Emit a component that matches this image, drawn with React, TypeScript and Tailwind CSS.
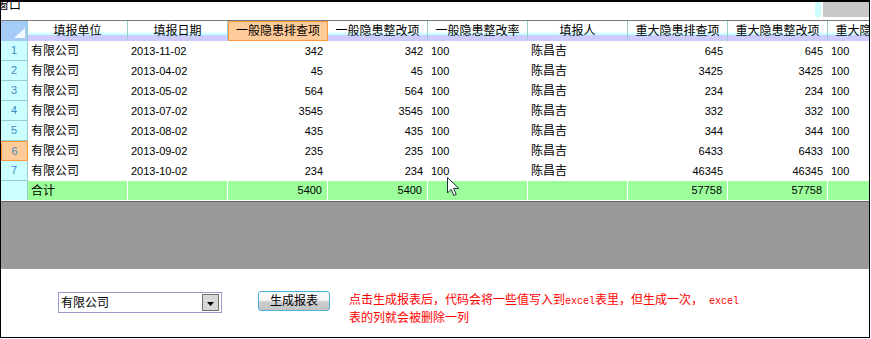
const headers = [
  "填报单位",
  "填报日期",
  "一般隐患排查项",
  "一般隐患整改项",
  "一般隐患整改率",
  "填报人",
  "重大隐患排查项",
  "重大隐患整改项",
  "重大隐患整改率",
];

// true = right aligned number column
const rightCols = [false, false, true, true, false, false, true, true, false];
const numCols = [false, true, true, true, true, false, true, true, true];

const rows = [
  ["有限公司", "2013-11-02", "342", "342", "100", "陈昌吉", "645", "645", "100"],
  ["有限公司", "2013-04-02", "45", "45", "100", "陈昌吉", "3425", "3425", "100"],
  ["有限公司", "2013-05-02", "564", "564", "100", "陈昌吉", "234", "234", "100"],
  ["有限公司", "2013-07-02", "3545", "3545", "100", "陈昌吉", "332", "332", "100"],
  ["有限公司", "2013-08-02", "435", "435", "100", "陈昌吉", "344", "344", "100"],
  ["有限公司", "2013-09-02", "235", "235", "100", "陈昌吉", "6433", "6433", "100"],
  ["有限公司", "2013-10-02", "234", "234", "100", "陈昌吉", "46345", "46345", "100"],
];

const totals = ["合计", "", "5400", "5400", "", "", "57758", "57758", ""];

const Cursor = () => (
  <svg
    className="absolute left-[447px] top-[177px]"
    width="13"
    height="20"
    viewBox="0 0 13 20"
  >
    <path
      d="M0.5 0.5 L0.5 16 L4.2 12.3 L6.8 18.5 L9.2 17.5 L6.6 11.4 L11.8 11.4 Z"
      fill="#ffffff"
      stroke="#1f2f3f"
      strokeWidth="1"
      strokeLinejoin="round"
    />
  </svg>
);

const App = () => {
  return (
    <div
      className="relative w-[871px] h-[339px] bg-white overflow-hidden"
      style={{ fontFamily: '"Liberation Sans", "Noto Sans CJK SC", sans-serif' }}
    >
      <div className="w-[870px] h-[338px] border-t-2 border-l border-r border-b border-black flex flex-col overflow-hidden">
        {/* title strip */}
        <div className="h-[18px] flex items-start">
          <span className="text-[12px] leading-none -ml-[4px] -mt-[3px] text-black">窗口</span>
          <div className="flex-1" />
          <div className="w-[6px] h-[17px] bg-[#ccffff] -mt-[2px]" />
          <div className="w-[2px]" />
          <div className="w-[46px] h-[17px] bg-[#c8c8c8] -mt-[2px]" />
        </div>

        {/* grid */}
        <div className="border-t border-[#7a7a7a] overflow-hidden">
          {/* header */}
          <div className="flex h-[20px]">
            <div className="relative w-[27px] shrink-0 bg-[#a4ccf6] border-r border-[#99cccc]">
              <svg className="absolute right-[2px] bottom-[3px]" width="11" height="10" viewBox="0 0 11 10">
                <path d="M11 0 L11 10 L0 10 Z" fill="#f4f8ff" />
              </svg>
            </div>
            {headers.map((h, i) =>
              i === 2 ? (
                <div
                  key={h}
                  className="w-[100px] shrink-0 border border-[#ff9a3c] bg-[#ffcc99] flex items-center justify-center text-[12px] text-black whitespace-nowrap"
                >
                  {h}
                </div>
              ) : (
                <div
                  key={h}
                  className="w-[100px] shrink-0 border-r border-[#99cccc] bg-[linear-gradient(to_bottom,#ffffff_0%,#ffffff_55%,#ccffff_62%,#ccffff_72%,#ccccff_72%,#ccccff_100%)] flex items-center justify-center text-[12px] text-black whitespace-nowrap overflow-hidden"
                >
                  {h}
                </div>
              )
            )}
          </div>

          {/* data rows */}
          {rows.map((r, ri) => (
            <div key={ri} className="flex h-[20px]">
              <div
                className={
                  ri === 5
                    ? "w-[27px] shrink-0 bg-[#ffcc99] border border-[#ff9a3c] flex items-center justify-center text-[11px] text-[#3a8ac4]"
                    : "w-[27px] shrink-0 bg-[#ccffff] border-r border-b border-[#99cccc] flex items-center justify-center text-[11px] text-[#3a8ac4]"
                }
              >
                {ri + 1}
              </div>
              {r.map((c, ci) => (
                <div
                  key={ci}
                  className={
                    "w-[100px] shrink-0 flex items-center whitespace-nowrap text-black " +
                    (rightCols[ci] ? "justify-end pr-[5px] " : "justify-start pl-[3px] ") +
                    (numCols[ci] ? "text-[11px]" : "text-[12px]")
                  }
                >
                  {c}
                </div>
              ))}
            </div>
          ))}

          {/* totals */}
          <div className="flex h-[20px] border-b border-white">
            <div className="w-[27px] shrink-0 bg-[#ccffff] border-r border-[#99cccc]" />
            {totals.map((c, ci) => (
              <div
                key={ci}
                className={
                  "w-[100px] shrink-0 bg-[#9cff9c] border-r border-white flex items-center whitespace-nowrap text-black " +
                  (rightCols[ci] ? "justify-end pr-[5px] " : "justify-start pl-[3px] ") +
                  (ci === 0 ? "text-[12px]" : "text-[11px]")
                }
              >
                {c}
              </div>
            ))}
          </div>
        </div>

        {/* empty grey area of the grid */}
        <div className="h-[68px] bg-[#999999] border-t border-[#666666]" />

        {/* bottom panel */}
        <div className="flex-1 flex items-start pl-[57px] pt-[23px]">
          <div className="w-[164px] h-[21px] border border-[#9a9ad0] flex items-center justify-between pl-[2px] pr-[2px]">
            <span className="text-[12px] text-black">有限公司</span>
            <div className="w-[17px] h-[17px] border border-[#6f6f6f] bg-[#d8d8d8] flex items-end justify-center pb-[4px]">
              <svg width="7" height="4" viewBox="0 0 7 4">
                <path d="M0 0 L7 0 L3.5 4 Z" fill="#000000" />
              </svg>
            </div>
          </div>
          <button className="ml-[36px] -mt-[1px] w-[72px] h-[20px] rounded-[3px] border border-[#4fb0e0] bg-[linear-gradient(to_bottom,#ffffff_0%,#f4f4f4_45%,#cccccc_55%,#c4c4c4_100%)] text-[12px] text-black leading-none">
            生成报表
          </button>
          <div className="ml-[19px] text-[12px] leading-[16px] text-[#ff0000] whitespace-nowrap">
            <div>
              点击生成报表后，代码会将一些值写入到<span className="text-[10px]" style={{ fontFamily: '"Liberation Mono", monospace' }}>excel</span>表里，但生成一次，
              <span className="text-[10px]" style={{ fontFamily: '"Liberation Mono", monospace' }}> excel</span>
            </div>
            <div>表的列就会被删除一列</div>
          </div>
        </div>
      </div>
      <Cursor />
    </div>
  );
};

export default App;
